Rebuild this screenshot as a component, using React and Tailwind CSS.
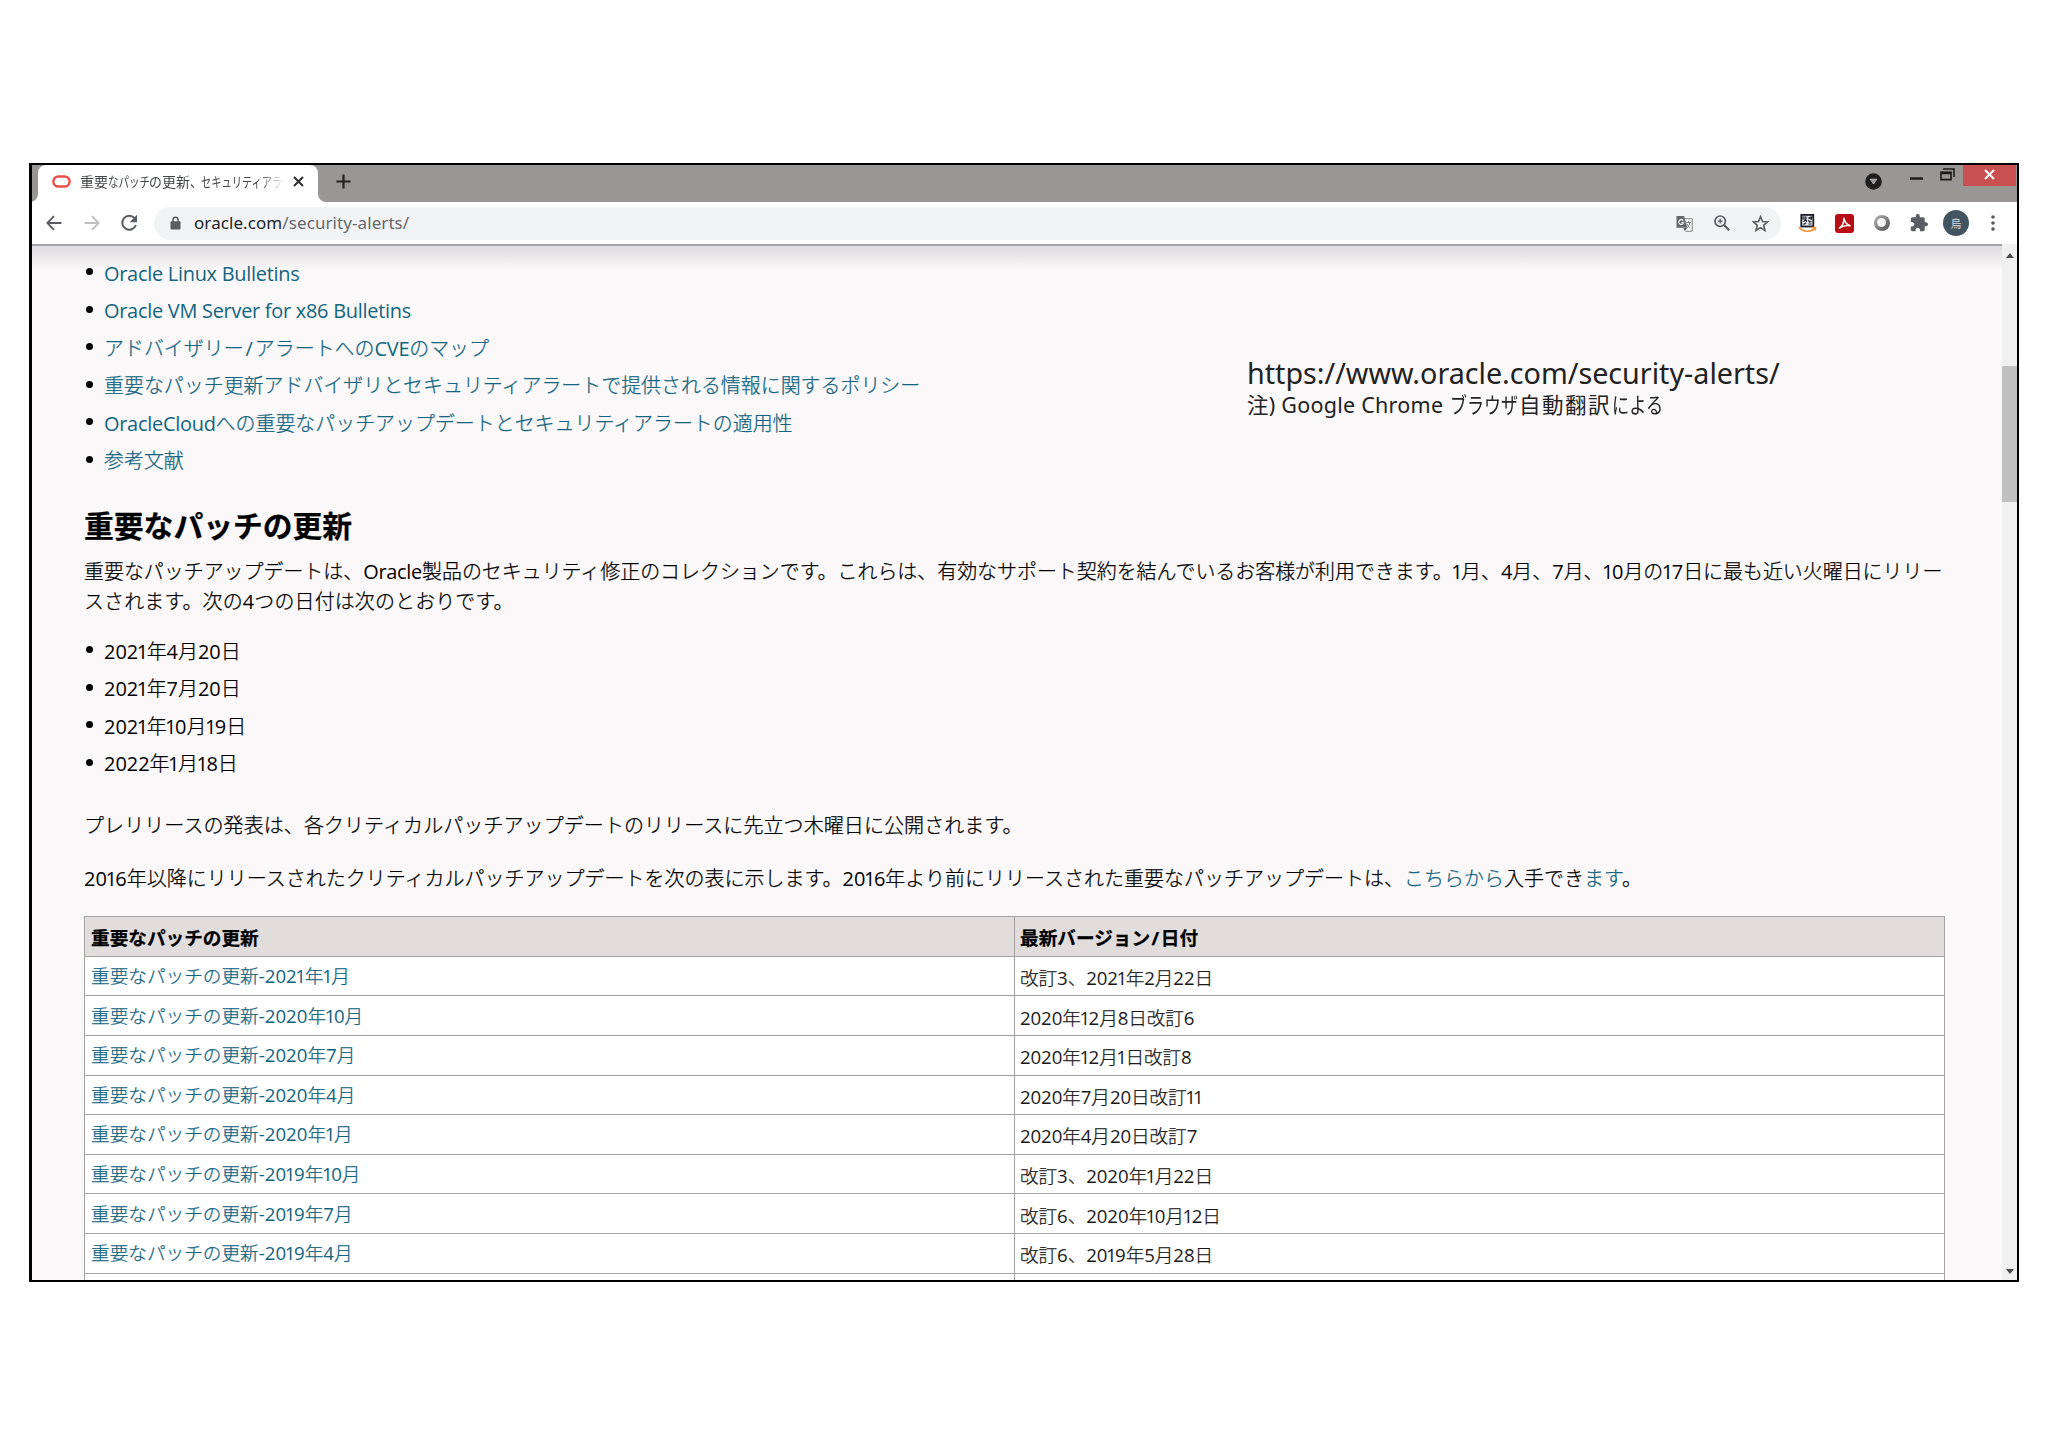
import { clsx } from "clsx";

const body = "font-['Open_Sans','Noto_Sans_CJK_JP',sans-serif] font-light [-webkit-text-stroke-width:0.25px]";

const bulletins = [
    "Oracle Linux Bulletins",
    "Oracle VM Server for x86 Bulletins",
    "アドバイザリー/アラートへのCVEのマップ",
    "重要なパッチ更新アドバイザリとセキュリティアラートで提供される情報に関するポリシー",
    "OracleCloudへの重要なパッチアップデートとセキュリティアラートの適用性",
    "参考文献",
];

const releaseDates = ["2021年4月20日", "2021年7月20日", "2021年10月19日", "2022年1月18日"];

const patches = [
    ["重要なパッチの更新-2021年1月", "改訂3、2021年2月22日"],
    ["重要なパッチの更新-2020年10月", "2020年12月8日改訂6"],
    ["重要なパッチの更新-2020年7月", "2020年12月1日改訂8"],
    ["重要なパッチの更新-2020年4月", "2020年7月20日改訂11"],
    ["重要なパッチの更新-2020年1月", "2020年4月20日改訂7"],
    ["重要なパッチの更新-2019年10月", "改訂3、2020年1月22日"],
    ["重要なパッチの更新-2019年7月", "改訂6、2020年10月12日"],
    ["重要なパッチの更新-2019年4月", "改訂6、2019年5月28日"],
];

const LATIN = /([1/]|[A-Za-z][A-Za-z0-9 ]*|[02-9-]+)/;

// Light Japanese with regular-weight Latin. Figures are proportional, so the
// "1" is set tighter than the other digits.
function Text({ children }) {
    return children.split(LATIN).map((part, i) => {
        if (i % 2 === 0) return part;
        return (
            <span
                key={i}
                className={clsx(
                    "font-normal [-webkit-text-stroke-width:0px]",
                    part === "1" && "mx-[-0.075em]",
                    part === "/" && "mx-[0.1em]",
                    /[A-Za-z]/.test(part) && "tracking-[-0.0135em]",
                )}
            >
                {part}
            </span>
        );
    });
}

// Condensed kana, as in a UI font.
function Kana({ width, scale, children }) {
    return (
        <span className={clsx("inline-block", width)}>
            <span className={clsx("inline-block origin-left whitespace-nowrap", scale)}>{children}</span>
        </span>
    );
}

function TabStrip() {
    return (
        <div className="flex h-[37px] shrink-0 bg-[#999696]">
            <div className="relative ml-[6px] flex w-[280px] items-center rounded-t-lg bg-white pl-[14px]">
                <svg className="absolute bottom-0 -left-2 size-2" viewBox="0 0 8 8">
                    <path d="M8 0v8H0a8 8 0 0 0 8-8z" fill="#fff" />
                </svg>
                <svg className="absolute -right-2 bottom-0 size-2" viewBox="0 0 8 8">
                    <path d="M0 0v8h8a8 8 0 0 1-8-8z" fill="#fff" />
                </svg>
                <svg className="mb-1 h-[13px] w-[19px] shrink-0" viewBox="0 0 19 13" fill="none">
                    <rect x="1.4" y="1.4" width="16.2" height="10.2" rx="5.1" stroke="#e8524b" strokeWidth="2.5" />
                </svg>
                <div className="mb-[6px] ml-[9px] flex w-[204px] shrink-0 items-baseline overflow-hidden font-['Noto_Sans_CJK_JP',sans-serif] text-[14px] leading-6 whitespace-nowrap text-[#45474a] [mask-image:linear-gradient(to_right,#000_88%,transparent)]">
                    重要
                    <Kana width="w-[41px]" scale="scale-x-[.75]">なパッチ</Kana>
                    <Kana width="w-[13px]" scale="scale-x-[.92]">の</Kana>
                    更新
                    <Kana width="w-[11px]" scale="scale-x-[.9]">、</Kana>
                    <Kana width="w-[83px]" scale="scale-x-[.73]">セキュリティアラ</Kana>
                </div>
                <svg className="mb-1 ml-[9px] size-[11px] shrink-0" viewBox="0 0 11 11" stroke="#2c2c2c" strokeWidth="1.9">
                    <path d="M1 1l9 9M10 1l-9 9" />
                </svg>
            </div>
            <svg className="mt-[9px] ml-[18px] size-[15px]" viewBox="0 0 15 15" stroke="#222" strokeWidth="2.2">
                <path d="M7.5 .5v14M.5 7.5h14" />
            </svg>
            <svg className="mt-[8px] ml-auto size-[17px]" viewBox="0 0 17 17">
                <circle cx="8.5" cy="8.5" r="8.3" fill="#1f1f1f" />
                <path d="M5.2 6.2h6.6L8.5 11z" fill="#999696" stroke="#c9c7c7" strokeWidth=".8" />
            </svg>
            <svg className="mt-[12px] ml-[28px] h-[3px] w-[13px]" viewBox="0 0 13 3">
                <path d="M0 1.5h13" stroke="#1b1b1b" strokeWidth="2.4" />
            </svg>
            <svg className="mt-[3px] ml-[17px] h-[13px] w-[15px]" viewBox="0 0 15 13" fill="none" stroke="#1b1b1b">
                <path d="M3 1h11v8" strokeWidth="1.6" />
                <path d="M1 4.2h10v7.4H1z" strokeWidth="1.6" />
                <path d="M1 5h10" strokeWidth="2.4" />
            </svg>
            <div className="mr-px ml-[8px] flex h-[21px] w-[53px] items-center justify-center bg-[#c85050]">
                <svg className="mb-[2px] size-[11px]" viewBox="0 0 11 11" stroke="#fff" strokeWidth="2">
                    <path d="M1 1l9 9M10 1l-9 9" />
                </svg>
            </div>
        </div>
    );
}

function Toolbar() {
    return (
        <div className="flex h-[44px] shrink-0 items-center border-b-2 border-[#a5a5a7] bg-white">
            <svg className="ml-[14px] size-[16px]" viewBox="0 0 16 16" fill="none" stroke="#5a5d61" strokeWidth="1.9">
                <path d="M15.5 8H1.5M8 1.2L1.4 8 8 14.8" />
            </svg>
            <svg className="ml-[22px] size-[16px]" viewBox="0 0 16 16" fill="none" stroke="#bcbec1" strokeWidth="1.9">
                <path d="M.5 8h14M8 1.2L14.6 8 8 14.8" />
            </svg>
            <svg className="ml-[20px] size-[18px]" viewBox="0 0 18 18">
                <path d="M14.6 4.2A7 7 0 1 0 15.9 11" fill="none" stroke="#5a5d61" strokeWidth="2" />
                <path d="M17 .8v7.4H9.6z" fill="#5a5d61" />
            </svg>
            <div className="ml-[16px] flex h-[33px] w-[1627px] items-center rounded-full bg-[#f1f3f4] pl-[16px]">
                <svg className="h-[14px] w-[11px] shrink-0" viewBox="0 0 11 14">
                    <path d="M3 6V3.8a2.5 2.5 0 0 1 5 0V6" fill="none" stroke="#5a5d61" strokeWidth="1.5" />
                    <rect x=".5" y="5.2" width="10" height="8.3" rx="1" fill="#5a5d61" />
                </svg>
                <div className="ml-[13px] font-['Noto_Sans',sans-serif] text-[17px] tracking-[0.08px] text-[#66696d]">
                    <span className="text-[#222427]">oracle.com</span>/security-alerts/
                </div>
                <svg className="mr-[21px] ml-auto size-[17px]" viewBox="0 0 17 17">
                    <path d="M7 3.8h9.2v12.4H9.4" fill="#fff" stroke="#77797c" />
                    <path d="M.5 1h7.6l3.2 11.8H.5z" fill="#66696c" />
                    <path d="M7.2 5.6A2.4 2.4 0 1 0 7.6 7.5H5.4" fill="none" stroke="#fff" strokeWidth="1.1" />
                    <path d="M9.8 7.4h5M12.4 6.2v1.2M14 7.6c-.6 2.4-1.6 4-3 5.2M11 8.8c.8 2 2 3.4 3.4 4.2" fill="none" stroke="#77797c" />
                    <path d="M7.5 13h3.6l-2.3 3z" fill="#55575a" />
                </svg>
                <svg className="mr-[22px] size-[16px]" viewBox="0 0 16 16" fill="none" stroke="#5a5d61" strokeWidth="1.7">
                    <circle cx="6.2" cy="6.2" r="5.2" />
                    <path d="M10 10l5.3 5.3" strokeWidth="2.2" />
                    <path d="M3.8 6.2h4.8M6.2 3.8v4.8" strokeWidth="1.3" />
                </svg>
                <svg className="mr-[12px] size-[17px]" viewBox="0 0 17 17" fill="none" stroke="#5a5d61" strokeWidth="1.6">
                    <path d="M8.5 1.6l2 4.9 5.2.4-4 3.4 1.3 5.1-4.5-2.8L4 15.4l1.3-5.1-4-3.4 5.2-.4z" />
                </svg>
            </div>
            <svg className="ml-[17px] size-[19px]" viewBox="0 0 19 19">
                <rect x="3.3" y=".9" width="12" height="11.6" fill="#e3e4e8" stroke="#1c1f2b" strokeWidth="1.8" />
                <path d="M5 3h3v2H5zM11 4l2.5-1v2zM5.500 7.500l2-1.500 1.500 1.500M10.500 6l1 2 2-.5M5.500 10.500l2.500-1.500M10.500 10h3" fill="none" stroke="#1c1f2b" strokeWidth="1.2" />
                <path d="M.8 13c4 5.4 12 5.4 15.4 1.600M13.500 13.500h4l-.7 3" fill="none" stroke="#f0963c" strokeWidth="1.6" />
            </svg>
            <svg className="ml-[18px] size-[19px]" viewBox="0 0 19 19">
                <rect width="19" height="19" rx="3" fill="#b80d12" />
                <path
                    d="M9 4.200c.4 3.300 2.300 6.200 6 7.600-3.600-.6-7.200 0-10.600 2.200C7.300 12 9 8.600 9 4.200z"
                    fill="none"
                    stroke="#fff"
                    strokeWidth="1.5"
                    strokeLinejoin="round"
                />
            </svg>
            <div className="ml-[20px] flex size-[16px] items-center justify-center rounded-full bg-linear-to-br from-[#b5b5b5] to-[#4f4f4f]">
                <div className="mr-px mb-px size-[9px] rounded-full bg-[#f3f3f3]" />
            </div>
            <svg className="ml-[20px] size-[18px]" viewBox="1 1 22 22" fill="#5a5d61">
                <path d="M20.5 11H19V7c0-1.1-.9-2-2-2h-4V3.5a2.5 2.5 0 0 0-5 0V5H4c-1.1 0-1.99.9-1.99 2v3.8H3.5c1.49 0 2.7 1.21 2.7 2.7s-1.21 2.7-2.7 2.7H2V20c0 1.1.9 2 2 2h3.8v-1.5c0-1.49 1.21-2.7 2.7-2.7s2.7 1.21 2.7 2.7V22H17c1.1 0 2-.9 2-2v-4h1.5a2.5 2.5 0 0 0 0-5z" />
            </svg>
            <div className="ml-[15px] flex size-[26px] items-center justify-center rounded-full bg-[#41545f] font-['Noto_Sans_CJK_JP',sans-serif] text-[11px] leading-none text-[#d5dde2]">
                烏
            </div>
            <svg className="ml-[22px] h-[16px] w-[4px]" viewBox="0 0 4 16" fill="#55585c">
                <circle cx="2" cy="2" r="1.8" />
                <circle cx="2" cy="8" r="1.8" />
                <circle cx="2" cy="14" r="1.8" />
            </svg>
        </div>
    );
}

function BulletList({ items, className }) {
    return (
        <ul className={className}>
            {items.map((item) => (
                <li key={item} className="flex h-[37.5px] items-center whitespace-nowrap">
                    <span className="mr-[11px] mb-[4px] ml-[2px] size-[7px] rounded-full bg-black" />
                    <span>
                        <Text>{item}</Text>
                    </span>
                </li>
            ))}
        </ul>
    );
}

function Scrollbar() {
    return (
        <div className="z-10 -mt-[2px] flex w-[15px] shrink-0 flex-col items-center bg-[#f1f0f0]">
            <svg className="mt-[9px] h-[5px] w-[8px]" viewBox="0 0 8 5">
                <path d="M0 5l4-5 4 5z" fill="#4b4b4b" />
            </svg>
            <div className="mt-[108px] h-[136px] w-full bg-[#c1c0c0]" />
            <svg className="mt-auto mb-[6px] h-[5px] w-[8px]" viewBox="0 0 8 5">
                <path d="M0 0h8L4 5z" fill="#4b4b4b" />
            </svg>
        </div>
    );
}

export default function App() {
    return (
        <div className="flex h-[1447px] w-[2048px] flex-col overflow-hidden bg-white pt-[163px] pl-[29px]">
            <div className="flex h-[1119px] w-[1990px] flex-col overflow-hidden border-2 border-l-3 border-black bg-[#fbf8f9]">
                <TabStrip />
                <Toolbar />
                <div className="relative flex min-h-0 flex-1">
                    <div className="absolute top-0 left-0 h-[24px] w-[1970px] bg-linear-to-b from-[#dcdbdd] to-[#fbf8f9]" />
                    <main className={clsx("relative min-w-0 flex-1 overflow-hidden pl-[52px] text-[19.95px] leading-[30px] text-black", body)}>
                        <BulletList items={bulletins} className="mt-[9px] text-[#12647f]" />

                        <h2 className="mt-[4px] font-['Noto_Sans_CJK_JP',sans-serif] text-[29.8px] leading-[80px] font-bold">重要なパッチの更新</h2>

                        <p className="-mt-[7px] whitespace-nowrap">
                            <Text>
                                重要なパッチアップデートは、Oracle製品のセキュリティ修正のコレクションです。これらは、有効なサポート契約を結んでいるお客様が利用できます。1月、4月、7月、10月の17日に最も近い火曜日にリリー
                            </Text>
                            <br />
                            <span className="tracking-[0.16px]">
                                <Text>スされます。次の4つの日付は次のとおりです。</Text>
                            </span>
                        </p>

                        <BulletList items={releaseDates} className="mt-[16px]" />

                        <p className="mt-[28px] text-[20px] tracking-[0.08px]">プレリリースの発表は、各クリティカルパッチアップデートのリリースに先立つ木曜日に公開されます。</p>
                        <p className="mt-[23px] text-[20px] whitespace-nowrap">
                            <Text>
                                2016年以降にリリースされたクリティカルパッチアップデートを次の表に示します。2016年より前にリリースされた重要なパッチアップデートは、
                            </Text>
                            <a className="text-[#12647f]">こちらから</a>入手でき<a className="text-[#12647f]">ます</a>。
                        </p>

                        <table className="mt-[22px] w-[1861px] table-fixed border-collapse text-[18.65px] leading-6">
                            <thead>
                                <tr className="h-[39.625px] bg-[#e1dddd] text-left">
                                    <th className="border border-[#a3a1a2] px-[6px] pt-[4px] font-bold">重要なパッチの更新</th>
                                    <th className="border border-[#a3a1a2] px-[5px] pt-[4px] font-bold">
                                        最新バージョン<span className="mx-[0.08em]">/</span>日付
                                    </th>
                                </tr>
                            </thead>
                            <tbody>
                                {patches.map(([name, revision]) => (
                                    <tr key={name} className="h-[39.625px] bg-white">
                                        <td className="border border-[#a3a1a2] px-[6px] text-[#12647f]">
                                            <Text>{name}</Text>
                                        </td>
                                        <td className="border border-[#a3a1a2] px-[5px] pt-[4px] tracking-[-0.1px] text-[#1a1a1a]">
                                            <Text>{revision}</Text>
                                        </td>
                                    </tr>
                                ))}
                                <tr className="h-[39.625px] bg-white">
                                    <td className="border border-[#a3a1a2]" />
                                    <td className="border border-[#a3a1a2]" />
                                </tr>
                            </tbody>
                        </table>
                    </main>

                    {/* note laid over the page */}
                    <div className="absolute top-[108px] left-[1215px] font-['Noto_Sans','Noto_Sans_CJK_JP',sans-serif] whitespace-nowrap text-[#222]">
                        <div className="text-[28.7px] leading-[38px]">https://www.oracle.com/security-alerts/</div>
                        <div className="-mt-px flex items-baseline text-[21.5px] leading-[28px]">
                            <span className="w-[203px] tracking-[0.25px]">注) Google Chrome</span>
                            <Kana width="w-[69px]" scale="scale-x-[.79]">ブラウザ</Kana>
                            <span className="w-[93px] tracking-[1.5px]">自動翻訳</span>
                            <Kana width="w-[52px]" scale="scale-x-[.8]">による</Kana>
                        </div>
                    </div>

                    <Scrollbar />
                </div>
            </div>
        </div>
    );
}
